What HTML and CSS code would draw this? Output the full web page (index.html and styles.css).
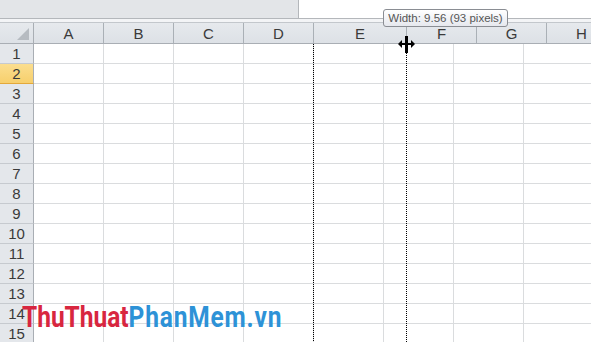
FILE: index.html
```html
<!DOCTYPE html>
<html lang="en">
<head>
    <meta charset="UTF-8">
    <title>Column Width</title>
    <link rel="stylesheet" href="styles.css">
</head>
<body>
<div class="screen">
    <!-- Formula bar -->
    <div class="topbar">
        <div class="bar-left"></div>
        <div class="bar-right"></div>
    </div>
    <div class="bar-gap"></div>

    <!-- Sheet -->
    <div class="sheet">
        <div class="head-row">
            <div class="corner"><span class="corner-mark"></span></div>
            <div class="col-head">A</div>
            <div class="col-head">B</div>
            <div class="col-head">C</div>
            <div class="col-head">D</div>
            <div class="col-head wide">E</div>
            <div class="col-head">F</div>
            <div class="col-head">G</div>
            <div class="col-head">H</div>
        </div>
        <div class="row"><div class="row-head">1</div><div class="cell"></div><div class="cell"></div><div class="cell"></div><div class="cell"></div><div class="cell"></div><div class="cell"></div><div class="cell"></div><div class="cell"></div></div>
        <div class="row"><div class="row-head active">2</div><div class="cell"></div><div class="cell"></div><div class="cell"></div><div class="cell"></div><div class="cell"></div><div class="cell"></div><div class="cell"></div><div class="cell"></div></div>
        <div class="row"><div class="row-head">3</div><div class="cell"></div><div class="cell"></div><div class="cell"></div><div class="cell"></div><div class="cell"></div><div class="cell"></div><div class="cell"></div><div class="cell"></div></div>
        <div class="row"><div class="row-head">4</div><div class="cell"></div><div class="cell"></div><div class="cell"></div><div class="cell"></div><div class="cell"></div><div class="cell"></div><div class="cell"></div><div class="cell"></div></div>
        <div class="row"><div class="row-head">5</div><div class="cell"></div><div class="cell"></div><div class="cell"></div><div class="cell"></div><div class="cell"></div><div class="cell"></div><div class="cell"></div><div class="cell"></div></div>
        <div class="row"><div class="row-head">6</div><div class="cell"></div><div class="cell"></div><div class="cell"></div><div class="cell"></div><div class="cell"></div><div class="cell"></div><div class="cell"></div><div class="cell"></div></div>
        <div class="row"><div class="row-head">7</div><div class="cell"></div><div class="cell"></div><div class="cell"></div><div class="cell"></div><div class="cell"></div><div class="cell"></div><div class="cell"></div><div class="cell"></div></div>
        <div class="row"><div class="row-head">8</div><div class="cell"></div><div class="cell"></div><div class="cell"></div><div class="cell"></div><div class="cell"></div><div class="cell"></div><div class="cell"></div><div class="cell"></div></div>
        <div class="row"><div class="row-head">9</div><div class="cell"></div><div class="cell"></div><div class="cell"></div><div class="cell"></div><div class="cell"></div><div class="cell"></div><div class="cell"></div><div class="cell"></div></div>
        <div class="row"><div class="row-head">10</div><div class="cell"></div><div class="cell"></div><div class="cell"></div><div class="cell"></div><div class="cell"></div><div class="cell"></div><div class="cell"></div><div class="cell"></div></div>
        <div class="row"><div class="row-head">11</div><div class="cell"></div><div class="cell"></div><div class="cell"></div><div class="cell"></div><div class="cell"></div><div class="cell"></div><div class="cell"></div><div class="cell"></div></div>
        <div class="row"><div class="row-head">12</div><div class="cell"></div><div class="cell"></div><div class="cell"></div><div class="cell"></div><div class="cell"></div><div class="cell"></div><div class="cell"></div><div class="cell"></div></div>
        <div class="row"><div class="row-head">13</div><div class="cell"></div><div class="cell"></div><div class="cell"></div><div class="cell"></div><div class="cell"></div><div class="cell"></div><div class="cell"></div><div class="cell"></div></div>
        <div class="row"><div class="row-head">14</div><div class="cell"></div><div class="cell"></div><div class="cell"></div><div class="cell"></div><div class="cell"></div><div class="cell"></div><div class="cell"></div><div class="cell"></div></div>
        <div class="row"><div class="row-head">15</div><div class="cell"></div><div class="cell"></div><div class="cell"></div><div class="cell"></div><div class="cell"></div><div class="cell"></div><div class="cell"></div><div class="cell"></div></div>
    </div>

    <!-- Resize guides -->
    <div class="guide guide-old"></div>
    <div class="guide guide-new"></div>

    <!-- Width tooltip -->
    <div class="tooltip">Width: 9.56 (93 pixels)</div>

    <!-- Resize cursor -->
    <svg class="cursor" width="17" height="17" viewBox="0 0 17 17">
        <rect x="7" y="0" width="3" height="17" fill="#000"/>
        <rect x="2" y="7" width="13" height="2" fill="#000"/>
        <polygon points="0,8 4,4 4,12" fill="#000"/>
        <polygon points="17,8 13,4 13,12" fill="#000"/>
    </svg>

    <!-- Watermark -->
    <div class="watermark"><span class="wm-red">ThuThuat</span><span class="wm-blue">PhanMem.vn</span></div>
</div>
</body>
</html>
```

FILE: styles.css
```css
/* Page */
body {
    margin: 0;
    padding: 0;
    background-color: #fff;
    font-family: 'Liberation Sans', Arial, sans-serif;
    color: #3a3a3a;
}

.screen {
    position: relative;
    width: 591px;
    height: 342px;
    overflow: hidden;
}

/* Formula bar */
.topbar {
    display: flex;
    height: 19px;
    box-sizing: border-box;
    border-bottom: 1px solid #b4b7bb;
}

.bar-left {
    width: 298px;
    background-color: #e3e5e8;
    border-right: 1px solid #b4b7bb;
}

.bar-right {
    flex: 1;
    background-color: #fff;
}

.bar-gap {
    height: 3px;
    background-color: #f3f4f6;
}

/* Sheet */
.sheet {
    display: flex;
    flex-direction: column;
}

.head-row {
    display: flex;
    height: 22px;
    box-sizing: border-box;
    border-top: 1px solid #c3c7cc;
    border-bottom: 1px solid #a9aeb4;
    background: linear-gradient(#e6e9ed, #dde1e6);
}

.corner {
    position: relative;
    flex: 0 0 34px;
    box-sizing: border-box;
    border-right: 1px solid #a9aeb4;
}

.corner-mark {
    position: absolute;
    right: 4px;
    bottom: 3px;
    width: 0;
    height: 0;
    border-left: 12px solid transparent;
    border-bottom: 12px solid #b6bbc1;
}

.col-head {
    flex: 0 0 70px;
    box-sizing: border-box;
    border-right: 1px solid #aab0b6;
    text-align: center;
    font-size: 15px;
    line-height: 21px;
}

.col-head.wide {
    flex-basis: 93px;
}

.row {
    display: flex;
    height: 20px;
}

.row-head {
    flex: 0 0 34px;
    box-sizing: border-box;
    border-right: 1px solid #a9aeb4;
    border-bottom: 1px solid #c6cacf;
    background-color: #e4e7eb;
    text-align: center;
    font-size: 15px;
    line-height: 20px;
}

.row-head.active {
    background: linear-gradient(#fbde8f, #f7cf6c);
    border-bottom-color: #e3a83a;
}

.cell {
    flex: 0 0 70px;
    box-sizing: border-box;
    border-right: 1px solid #dadcde;
    border-bottom: 1px solid #dadcde;
}

/* Dotted resize guides */
.guide {
    position: absolute;
    top: 44px;
    bottom: 0;
    width: 1px;
    background: repeating-linear-gradient(#000 0 1px, transparent 1px 2px);
}

.guide-old {
    left: 313px;
}

.guide-new {
    left: 406px;
    top: 53px;
}

/* Tooltip */
.tooltip {
    position: absolute;
    left: 383px;
    top: 9px;
    width: 125px;
    height: 18px;
    box-sizing: border-box;
    border: 1px solid #8a8d93;
    border-radius: 3px;
    background: linear-gradient(#ffffff, #e6e8ee);
    font-size: 11.5px;
    line-height: 16px;
    text-align: center;
    color: #555;
    white-space: nowrap;
}

.cursor {
    position: absolute;
    left: 398px;
    top: 36px;
}

/* Watermark */
.watermark {
    position: absolute;
    left: 22px;
    top: 303px;
    font-family: Roboto, 'Liberation Sans', sans-serif;
    font-weight: bold;
    font-size: 29.5px;
    line-height: 1;
    white-space: nowrap;
    transform: scaleX(0.83);
    transform-origin: left top;
}

.wm-red {
    color: #d8263f;
}

.wm-blue {
    color: #2d92d7;
    letter-spacing: 1px;
}
```
